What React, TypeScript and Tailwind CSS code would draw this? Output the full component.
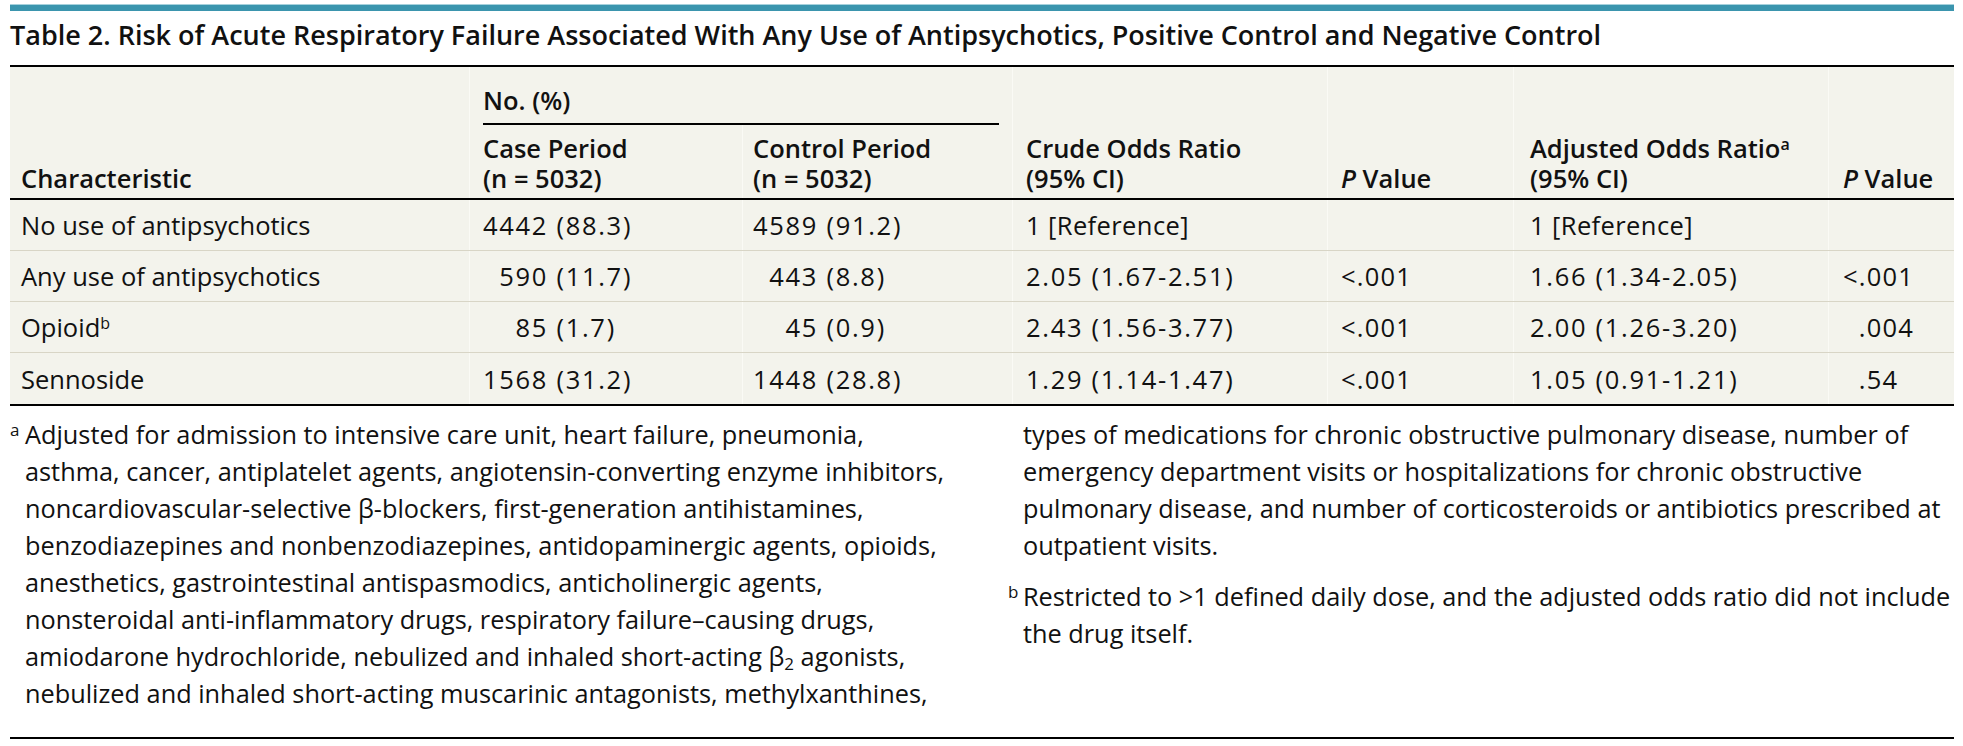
import React from 'react';

type Row = {
  label: string;
  sup?: string;
  caseN: [string, string];
  ctrlN: [string, string];
  crude: string;
  crudeP: string;
  adjusted: string;
  adjP?: [string, string];
};

const rows: Row[] = [
  {
    label: 'No use of antipsychotics',
    caseN: ['4442', '88.3'],
    ctrlN: ['4589', '91.2'],
    crude: '1 [Reference]',
    crudeP: '',
    adjusted: '1 [Reference]',
  },
  {
    label: 'Any use of antipsychotics',
    caseN: ['590', '11.7'],
    ctrlN: ['443', '8.8'],
    crude: '2.05 (1.67-2.51)',
    crudeP: '<.001',
    adjusted: '1.66 (1.34-2.05)',
    adjP: ['<', '.001'],
  },
  {
    label: 'Opioid',
    sup: 'b',
    caseN: ['85', '1.7'],
    ctrlN: ['45', '0.9'],
    crude: '2.43 (1.56-3.77)',
    crudeP: '<.001',
    adjusted: '2.00 (1.26-3.20)',
    adjP: ['', '.004'],
  },
  {
    label: 'Sennoside',
    caseN: ['1568', '31.2'],
    ctrlN: ['1448', '28.8'],
    crude: '1.29 (1.14-1.47)',
    crudeP: '<.001',
    adjusted: '1.05 (0.91-1.21)',
    adjP: ['', '.54'],
  },
];

const footLeft = [
  'asthma, cancer, antiplatelet agents, angiotensin-converting enzyme inhibitors,',
  'noncardiovascular-selective β-blockers, first-generation antihistamines,',
  'benzodiazepines and nonbenzodiazepines, antidopaminergic agents, opioids,',
  'anesthetics, gastrointestinal antispasmodics, anticholinergic agents,',
  'nonsteroidal anti-inflammatory drugs, respiratory failure–causing drugs,',
];

const footRight = [
  'types of medications for chronic obstructive pulmonary disease, number of',
  'emergency department visits or hospitalizations for chronic obstructive',
  'pulmonary disease, and number of corticosteroids or antibiotics prescribed at',
  'outpatient visits.',
];

const cols = 'grid grid-cols-[459px_273px_270px_315px_186px_315px_126px]';
const sep = 'border-l border-[#fafaf5]';

// the source font has wide figures, so numeric cells get some tracking
const num = 'tracking-[1.7px] whitespace-nowrap';

function Count({ value }: { value: [string, string] }) {
  return (
    <span className={num}>
      <span className="inline-block w-[calc(4ch+6.8px)] text-right">{value[0]}</span> ({value[1]})
    </span>
  );
}

function Ratio({ text }: { text: string }) {
  const isRef = text.startsWith('1 [');
  return <span className={isRef ? 'tracking-[0.4px]' : num}>{text}</span>;
}

function PLabel() {
  return (
    <>
      <i>P</i> Value
    </>
  );
}

export default function App() {
  return (
    <div className="w-[1963px] h-[746px] bg-white pl-[10px] pr-[9px] pt-[4px] font-['Open_Sans',sans-serif] text-[#111]">
      <div className="h-[7px] border-t border-[#a6d1dc] bg-[#3b95ae]" />

      <h2 className="pt-[7px] pb-[13px] text-[27px] leading-[34px] font-semibold whitespace-nowrap">
        Table 2. Risk of Acute Respiratory Failure Associated With Any Use of Antipsychotics,
        Positive Control and Negative Control
      </h2>

      <div className="border-t-2 border-b-2 border-black bg-[#f3f3ec] text-[25.5px]">
        {/* header */}
        <div className={`${cols} font-semibold leading-[30px] border-b-2 border-black`}>
          <div className="row-span-2 self-end pl-[11px] pb-[5px]">Characteristic</div>
          <div className={`col-span-2 ${sep}`}>
            <div className="mx-[13px] pt-[18px] pb-[8px] border-b-2 border-black">No. (%)</div>
          </div>
          <div className={`row-span-2 h-full flex items-end pl-[13px] pb-[5px] ${sep}`}>
            <span>
              Crude Odds Ratio
              <br />
              (95% CI)
            </span>
          </div>
          <div className={`row-span-2 h-full flex items-end pl-[13px] pb-[5px] ${sep}`}>
            <span>
              <PLabel />
            </span>
          </div>
          <div className={`row-span-2 h-full flex items-end pl-[16px] pb-[5px] ${sep}`}>
            <span>
              Adjusted Odds Ratio<sup className="text-[16px]">a</sup>
              <br />
              (95% CI)
            </span>
          </div>
          <div className={`row-span-2 h-full flex items-end pl-[14px] pb-[5px] ${sep}`}>
            <span>
              <PLabel />
            </span>
          </div>
          <div className={`pl-[13px] pt-[8px] pb-[5px] ${sep}`}>
            Case Period
            <br />
            (n = 5032)
          </div>
          <div className={`pl-[10px] pt-[8px] pb-[5px] ${sep}`}>
            Control Period
            <br />
            (n = 5032)
          </div>
        </div>

        {/* body */}
        {rows.map((r, i) => (
          <div
            key={r.label}
            className={`${cols} h-[51px] leading-[30px] ${
              i < rows.length - 1 ? 'border-b border-[#d8d5c6]' : ''
            }`}
          >
            <div className="flex items-center pl-[11px]">
              <span>
                {r.label}
                {r.sup && <sup className="text-[16px]">{r.sup}</sup>}
              </span>
            </div>
            <div className={`flex items-center pl-[13px] ${sep}`}>
              <Count value={r.caseN} />
            </div>
            <div className={`flex items-center pl-[10px] ${sep}`}>
              <Count value={r.ctrlN} />
            </div>
            <div className={`flex items-center pl-[13px] ${sep}`}>
              <Ratio text={r.crude} />
            </div>
            <div className={`flex items-center pl-[13px] ${sep}`}>
              <span className="tracking-[1.2px]">{r.crudeP}</span>
            </div>
            <div className={`flex items-center pl-[16px] ${sep}`}>
              <Ratio text={r.adjusted} />
            </div>
            <div className={`flex items-center pl-[14px] ${sep}`}>
              {r.adjP && (
                <span className="tracking-[1.2px]">
                  <span className="inline-block w-[calc(1ch+1.2px)] text-right">{r.adjP[0]}</span>
                  {r.adjP[1]}
                </span>
              )}
            </div>
          </div>
        ))}
      </div>

      {/* footnotes */}
      <div className="grid grid-cols-[998px_1fr] pt-[10px] pb-[25px] border-b-2 border-black text-[25.3px] leading-[37px] whitespace-nowrap">
        <div className="pl-[15px]">
          <div>
            <sup className="inline-block w-[15px] -ml-[15px] text-[17px]">a</sup>
            Adjusted for admission to intensive care unit, heart failure, pneumonia,
          </div>
          {footLeft.map((line) => (
            <div key={line}>{line}</div>
          ))}
          <div>
            amiodarone hydrochloride, nebulized and inhaled short-acting β
            <sub className="text-[17px]">2</sub> agonists,
          </div>
          <div>nebulized and inhaled short-acting muscarinic antagonists, methylxanthines,</div>
        </div>
        <div className="pl-[15px]">
          {footRight.map((line) => (
            <div key={line}>{line}</div>
          ))}
          <div className="mt-[14px]">
            <sup className="inline-block w-[15px] -ml-[15px] text-[17px]">b</sup>
            Restricted to &gt;1 defined daily dose, and the adjusted odds ratio did not include
          </div>
          <div>the drug itself.</div>
        </div>
      </div>
    </div>
  );
}
